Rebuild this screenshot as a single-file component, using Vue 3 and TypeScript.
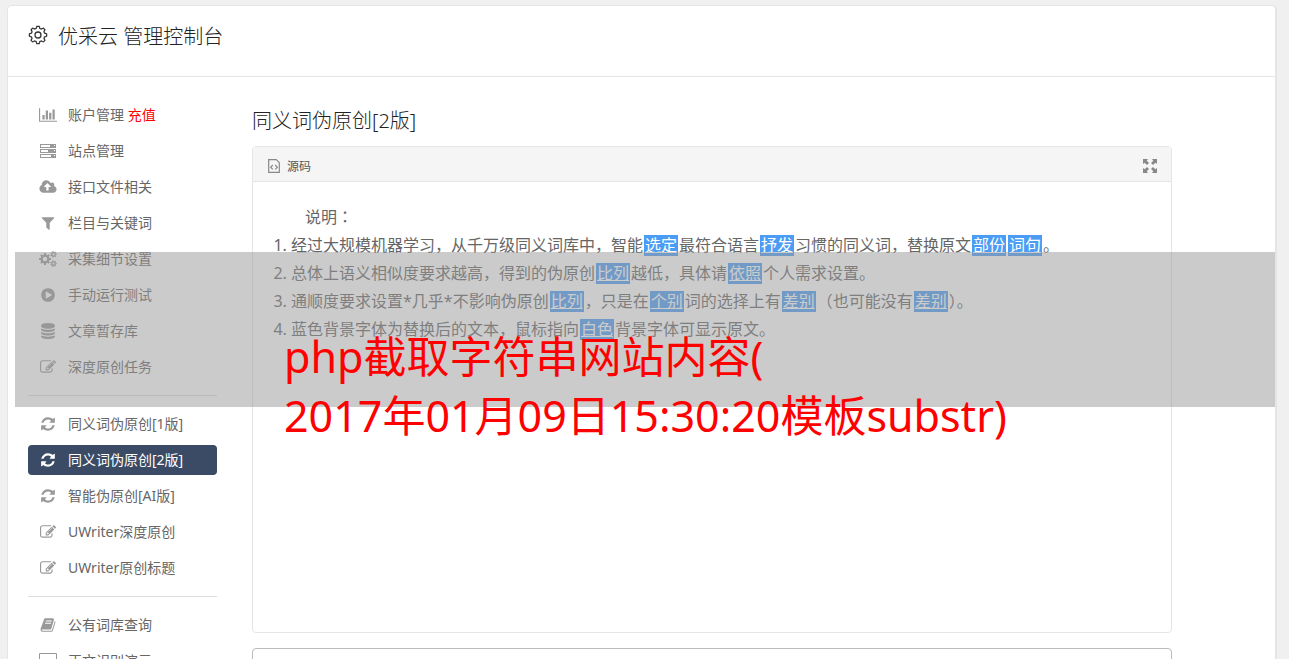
<script setup lang="ts">
interface Shape {
  box: string
  w: number
  h: number
  d: string
}
interface NavItem {
  icon: string
  label: string
  extra?: string
  active?: boolean
}
interface Piece {
  text: string
  swapped?: boolean
}

function circle(cx: number, cy: number, r: number): string {
  return `M${cx - r} ${cy}a${r} ${r} 0 1 0 ${2 * r} 0a${r} ${r} 0 1 0 ${-2 * r} 0z`
}

function gear(cx: number, cy: number, outer: number, inner: number, hole: number, teeth: number): string {
  const points: string[] = []
  const step = (Math.PI * 2) / teeth
  for (let i = 0; i < teeth; i++) {
    const corners: [number, number][] = [[-0.3, inner], [-0.2, outer], [0.2, outer], [0.3, inner]]
    for (const [offset, radius] of corners) {
      const angle = (i + offset) * step
      points.push(`${(cx + Math.cos(angle) * radius).toFixed(2)} ${(cy + Math.sin(angle) * radius).toFixed(2)}`)
    }
  }
  return `M${points.join('L')}z${circle(cx, cy, hole)}`
}

function scallop(cx: number, cy: number, radius: number, lobes: number): string {
  const points: string[] = []
  for (let i = 0; i < 96; i++) {
    const angle = (i / 96) * Math.PI * 2
    const wave = Math.max(-0.6, Math.min(0.5, Math.cos(angle * lobes)))
    const r = radius + wave * 1.7
    points.push(`${(cx + Math.sin(angle) * r).toFixed(2)} ${(cy - Math.cos(angle) * r).toFixed(2)}`)
  }
  return `M${points.join('L')}z`
}

const titleGear = scallop(10, 10, 7.8, 8)

const icons: Record<string, Shape> = {
  chart: {
    box: '0 0 2048 1792', w: 18, h: 16,
    d: 'M640 896v512h-256v-512h256zm384-512v1024h-256v-1024h256zm1024 1152v128h-2048v-1536h128v1408h1920zm-640-896v768h-256v-768h256zm384-384v1152h-256v-1152h256z',
  },
  server: {
    box: '0 0 16 16', w: 16, h: 16,
    d: 'M0 1h16v4H0zM1 2v2h9V2zM14 2v1h1V2zM0 6h16v4H0zM1 7v2h7V7zM14 7v1h1V7zM0 11h16v4H0zM1 12v2h10v-2zM14 12v1h1v-1z',
  },
  cloud: {
    box: '-64 0 1920 1792', w: 18, h: 16,
    d: 'M1216 864q0-14-9-23l-352-352q-9-9-23-9t-23 9l-351 351q-10 12-10 24 0 14 9 23t23 9h224v352q0 13 9.5 22.5t22.5 9.5h192q13 0 22.5-9.5t9.5-22.5v-352h224q13 0 22.5-9.5t9.5-22.5zm640 288q0 159-112.5 271.5t-271.5 112.5h-1088q-185 0-316.5-131.5t-131.5-316.5q0-130 70-240t188-165q-2-30-2-43 0-212 150-362t362-150q156 0 285.5 87t188.5 231q71-62 166-62 106 0 181 75t75 181q0 76-41 138 130 31 213.5 135.5t83.5 238.5z',
  },
  filter: {
    box: '0 0 1792 1792', w: 16, h: 16,
    d: 'M1595 295q17 41-14 70l-493 493v742q0 42-39 59-13 5-25 5-27 0-45-19l-256-256q-19-19-19-45v-486l-493-493q-31-29-14-70 17-39 59-39h1280q42 0 59 39z',
  },
  cogs: {
    box: '0 0 18 16', w: 18, h: 16,
    d: gear(6, 8, 6, 4.5, 2.2, 8) + gear(14.5, 3.4, 3.3, 2.4, 1.1, 7) + gear(14.5, 12.6, 3.3, 2.4, 1.1, 7),
  },
  play: {
    box: '0 0 1792 1792', w: 16, h: 16,
    d: 'M896 128q209 0 385.5 103t279.5 279.5 103 385.5-103 385.5-279.5 279.5-385.5 103-385.5-103-279.5-279.5-103-385.5 103-385.5 279.5-279.5 385.5-103zm384 823q32-18 32-55t-32-55l-544-320q-31-19-64-1-32 19-32 56v640q0 37 32 56 16 8 32 8 17 0 32-9z',
  },
  database: {
    box: '0 0 1792 1792', w: 16, h: 16,
    d: 'M896 768q237 0 443-43t325-127v170q0 69-103 128t-280 93.5-385 34.5-385-34.5-280-93.5-103-128v-170q119 84 325 127t443 43zm0 768q237 0 443-43t325-127v170q0 69-103 128t-280 93.5-385 34.5-385-34.5-280-93.5-103-128v-170q119 84 325 127t443 43zm0-384q237 0 443-43t325-127v170q0 69-103 128t-280 93.5-385 34.5-385-34.5-280-93.5-103-128v-170q119 84 325 127t443 43zm0-1152q208 0 385 34.5t280 93.5 103 128v128q0 69-103 128t-280 93.5-385 34.5-385-34.5-280-93.5-103-128v-128q0-69 103-128t280-93.5 385-34.5z',
  },
  edit: {
    box: '0 0 1792 1792', w: 16, h: 16,
    d: 'M888 1184l116-116-152-152-116 116v56h96v96h56zm440-720q-16-16-33 1l-350 350q-17 17-1 33t33-1l350-350q17-17 1-33zm80 594v190q0 119-84.5 203.5t-203.5 84.5h-832q-119 0-203.5-84.5t-84.5-203.5v-832q0-119 84.5-203.5t203.5-84.5h832q63 0 117 25 15 7 18 23 3 17-9 29l-49 49q-14 14-32 8-23-6-45-6h-832q-66 0-113 47t-47 113v832q0 66 47 113t113 47h832q66 0 113-47t47-113v-126q0-13 9-22l64-64q15-15 35-7t20 29zm-96-738l288 288-672 672h-288v-288zm444 132l-92 92-288-288 92-92q28-28 68-28t68 28l152 152q28 28 28 68t-28 68z',
  },
  refresh: {
    box: '0 0 1792 1792', w: 16, h: 16,
    d: 'M1639 1056q0 5-1 7-64 268-268 434.5t-478 166.5q-146 0-282.5-55t-243.5-157l-129 129q-19 19-45 19t-45-19-19-45v-448q0-26 19-45t45-19h448q26 0 45 19t19 45-19 45l-137 137q71 66 161 102t187 36q134 0 250-65t186-179q11-17 53-117 8-23 30-23h192q13 0 22.5 9.5t9.5 22.5zm25-800v448q0 26-19 45t-45 19h-448q-26 0-45-19t-19-45 19-45l138-138q-148-137-349-137-134 0-250 65t-186 179q-11 17-53 117-8 23-30 23h-199q-13 0-22.5-9.5t-9.5-22.5v-7q65-268 270-434.5t480-166.5q146 0 284 55.5t245 156.5l130-129q19-19 45-19t45 19 19 45z',
  },
  book: {
    box: '0 0 1792 1792', w: 16, h: 16,
    d: 'M1703 478q40 57 18 129l-275 906q-19 64-76.5 107.5t-122.5 43.5h-923q-77 0-148.5-53.5t-99.5-131.5q-24-67-2-127 0-4 3-27t4-37q1-8-3-21.5t-3-19.5q2-11 8-21t16.5-23.5 16.5-23.5q23-38 45-91.5t30-91.5q3-10 .5-30t-.5-28q3-11 17-28t17-23q21-36 42-92t25-90q1-9-2.5-32t.5-28q4-13 22-30.5t22-22.5q19-26 42.5-84.5t27.5-96.5q1-8-3-25.5t-2-26.5q2-8 9-18t18-23 17-21q8-12 16.5-30.5t15-35 16-36 19.5-32 26.5-23.5 36-11.5 47.5 5.5l-1 3q38-9 51-9h761q74 0 114 56t18 130l-274 906q-36 119-71.5 153.5t-128.5 34.5h-869q-27 0-38 15-11 16-1 43 24 70 144 70h923q29 0 56-15.5t35-41.5l300-987q7-22 5-57 38 15 59 43zm-1064 2q-4 13 2 22.5t20 9.5h608q13 0 25.5-9.5t16.5-22.5l21-64q4-13-2-22.5t-20-9.5h-608q-13 0-25.5 9.5t-16.5 22.5zm-83 256q-4 13 2 22.5t20 9.5h608q13 0 25.5-9.5t16.5-22.5l21-64q4-13-2-22.5t-20-9.5h-608q-13 0-25.5 9.5t-16.5 22.5z',
  },
  screen: {
    box: '0 0 18 16', w: 18, h: 16,
    d: 'M1 0h16a1 1 0 0 1 1 1v11a1 1 0 0 1-1 1h-6v2h2v1H5v-1h2v-2H1a1 1 0 0 1-1-1V1a1 1 0 0 1 1-1zM1 1v9h16V1z',
  },
}

const groups: NavItem[][] = [
  [
    { icon: 'chart', label: '账户管理', extra: '充值' },
    { icon: 'server', label: '站点管理' },
    { icon: 'cloud', label: '接口文件相关' },
    { icon: 'filter', label: '栏目与关键词' },
    { icon: 'cogs', label: '采集细节设置' },
    { icon: 'play', label: '手动运行测试' },
    { icon: 'database', label: '文章暂存库' },
    { icon: 'edit', label: '深度原创任务' },
  ],
  [
    { icon: 'refresh', label: '同义词伪原创[1版]' },
    { icon: 'refresh', label: '同义词伪原创[2版]', active: true },
    { icon: 'refresh', label: '智能伪原创[AI版]' },
    { icon: 'edit', label: 'UWriter深度原创' },
    { icon: 'edit', label: 'UWriter原创标题' },
  ],
  [
    { icon: 'book', label: '公有词库查询' },
    { icon: 'screen', label: '正文识别演示' },
  ],
]

const notes: Piece[][] = [
  [
    { text: '经过大规模机器学习，从千万级同义词库中，智能' },
    { text: '选定', swapped: true },
    { text: '最符合语言' },
    { text: '抒发', swapped: true },
    { text: '习惯的同义词，替换原文' },
    { text: '部份', swapped: true },
    { text: '词句', swapped: true },
    { text: '。' },
  ],
  [
    { text: '总体上语义相似度要求越高，得到的伪原创' },
    { text: '比列', swapped: true },
    { text: '越低，具体请' },
    { text: '依照', swapped: true },
    { text: '个人需求设置。' },
  ],
  [
    { text: '通顺度要求设置*几乎*不影响伪原创' },
    { text: '比列', swapped: true },
    { text: '，只是在' },
    { text: '个别', swapped: true },
    { text: '词的选择上有' },
    { text: '差别', swapped: true },
    { text: '（也可能没有' },
    { text: '差别', swapped: true },
    { text: '）。' },
  ],
  [
    { text: '蓝色背景字体为替换后的文本，鼠标指向' },
    { text: '白色', swapped: true },
    { text: '背景字体可显示原文。' },
  ],
]
</script>

<template>
  <div class="page" lang="zh-CN">
    <div class="card">
      <header class="top">
        <svg class="top-icon" viewBox="0 0 20 20" aria-hidden="true">
          <path :d="titleGear" />
          <circle cx="10" cy="10" r="3" />
        </svg>
        <h1>优采云 管理控制台</h1>
      </header>
      <div class="columns">
        <nav class="side">
          <ul v-for="(group, g) in groups" :key="g" class="group">
            <li v-for="item in group" :key="item.label">
              <a href="#" class="item" :class="{ active: item.active }">
                <span class="slot">
                  <svg :viewBox="icons[item.icon].box" :width="icons[item.icon].w" :height="icons[item.icon].h" aria-hidden="true">
                    <path fill-rule="evenodd" :d="icons[item.icon].d" />
                  </svg>
                </span>
                <span>{{ item.label }} <span v-if="item.extra" class="extra">{{ item.extra }}</span></span>
              </a>
            </li>
          </ul>
        </nav>
        <main class="main">
          <h2>同义词伪原创[2版]</h2>
          <section class="editor">
            <div class="toolbar">
              <button type="button" class="tool">
                <svg class="source-icon" viewBox="0 0 12 14" aria-hidden="true">
                  <path d="M.7.7h7.6l3 3v9.6H.7zM4.8 6 2.7 8.2l2.1 2.2M7.2 6l2.1 2.2-2.1 2.2" />
                </svg>
                源码
              </button>
              <button type="button" class="tool" aria-label="全屏">
                <svg class="expand-icon" viewBox="0 0 14 14" aria-hidden="true">
                  <path d="M0 0h5L3.7 1.7 6 4 4 6 1.7 3.7 0 5zM14 0v5l-1.7-1.3L10 6 8 4l2.3-2.3L9 0zM0 14V9l1.7 1.3L4 8l2 2-2.3 2.3L5 14zM14 14H9l1.3-1.7L8 10l2-2 2.3 2.3L14 9z" />
                </svg>
              </button>
            </div>
            <div class="text">
              <p>说明<span class="colon" lang="zh-TW">：</span></p>
              <ol>
                <li v-for="(note, n) in notes" :key="n">
                  <template v-for="(piece, p) in note" :key="p"><mark v-if="piece.swapped">{{ piece.text }}</mark><template v-else>{{ piece.text }}</template></template>
                </li>
              </ol>
            </div>
          </section>
          <textarea class="input" aria-label="原文"></textarea>
        </main>
      </div>
    </div>
    <div class="band"></div>
    <div class="caption">php截取字符串网站内容(<br>2017年01月09日15:30:20模板substr)</div>
  </div>
</template>

<style>
body {
  margin: 0;
  background: #f0f0f0;
}
</style>

<style scoped>
.page {
  position: relative;
  box-sizing: border-box;
  height: 100vh;
  overflow: hidden;
  padding: 5px 12px 0 7px;
  background: #f0f0f0;
  color: #666;
  font-family: "Noto Sans", "Noto Sans CJK SC", sans-serif;
  font-size: 14px;
  font-weight: 400;
}
.card {
  border: 1px solid #e5e5e5;
  border-right-width: 2px;
  border-radius: 5px;
  background: #fff;
}
.top {
  display: flex;
  align-items: center;
  gap: 10px;
  box-sizing: border-box;
  height: 71px;
  padding: 0 20px 12px;
  border-bottom: 1px solid #e5e5e5;
  color: #333;
}
.top-icon {
  width: 20px;
  height: 20px;
  fill: none;
  stroke: #333;
  stroke-width: 1.3;
}
h1,
h2 {
  margin: 0;
  color: #222;
  font-size: 20px;
  font-weight: 300;
  line-height: 28px;
}
h1 {
  padding-top: 4px;
}
.columns {
  display: flex;
  gap: 35px;
  padding: 23px 103px 0 20px;
}
.side {
  flex: none;
  width: 189px;
}
.group {
  display: flex;
  flex-direction: column;
  gap: 6px;
  margin: 0;
  padding: 0;
  list-style: none;
}
.group + .group {
  margin-top: 13px;
  padding-top: 13px;
  border-top: 1px solid #ddd;
}
.item {
  display: flex;
  align-items: center;
  gap: 10px;
  height: 30px;
  padding: 0 10px;
  border-radius: 4px;
  color: #666;
  line-height: 20px;
  text-decoration: none;
}
.slot {
  display: flex;
  justify-content: center;
  width: 20px;
}
.slot svg {
  fill: #999;
}
.extra {
  color: #f00;
}
.active {
  background: #3b4b66;
  color: #fff;
}
.active .slot svg {
  fill: #fff;
}
.main {
  flex: 1;
  min-width: 0;
  padding-top: 7px;
}
.editor {
  margin-top: 11px;
  border: 1px solid #e5e5e5;
  border-radius: 4px;
}
.toolbar {
  display: flex;
  align-items: center;
  justify-content: space-between;
  box-sizing: border-box;
  height: 35px;
  padding: 3px 14px 0 15px;
  border-bottom: 1px solid #e5e5e5;
  background: #f5f5f5;
}
.tool {
  display: flex;
  align-items: center;
  gap: 7px;
  padding: 0;
  border: 0;
  background: none;
  color: #555;
  font: inherit;
  font-size: 12px;
}
.source-icon {
  width: 12px;
  height: 14px;
  fill: none;
  stroke: #888;
  stroke-width: 1.2;
}
.expand-icon {
  width: 14px;
  height: 14px;
  fill: #888;
}
.text {
  min-height: 410px;
  padding: 20px;
  font-size: 16px;
  line-height: 28px;
}
.text p {
  margin: 0;
  text-indent: 32px;
}
.colon {
  font-family: "Noto Sans CJK TC", sans-serif;
}
.text ol {
  margin: 0;
  padding-left: 18px;
}
mark {
  display: inline-block;
  margin: 0 1px;
  padding: 0 1px;
  background: #4a9cf5;
  color: #fff;
  line-height: 21px;
  text-decoration: underline;
}
.input {
  display: block;
  box-sizing: border-box;
  width: 100%;
  height: 120px;
  margin-top: 15px;
  border: 1px solid #bbb;
  border-radius: 4px;
  resize: none;
}
.band {
  position: absolute;
  top: 252px;
  right: 14px;
  left: 15px;
  height: 155px;
  background: rgba(151, 151, 151, 0.5);
}
.caption {
  position: absolute;
  top: 327px;
  left: 284px;
  color: #f00;
  font-size: 43px;
  line-height: 59px;
  white-space: nowrap;
}
</style>
